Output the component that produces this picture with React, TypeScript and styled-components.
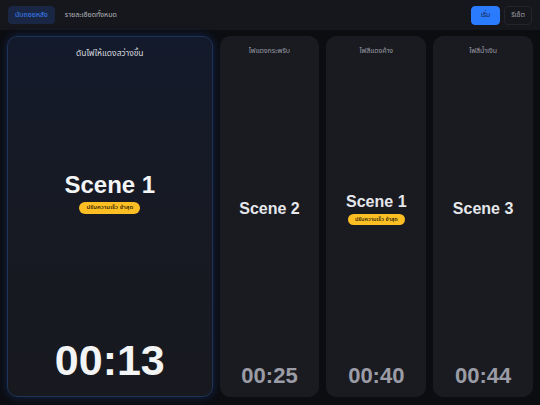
import React from 'react';
import styled, { createGlobalStyle } from 'styled-components';

const GlobalStyle = createGlobalStyle`
  html, body {
    margin: 0;
    padding: 0;
    background: #0c0d11;
    font-family: 'Liberation Sans', Arial, 'Noto Sans Thai', 'Noto Sans', sans-serif;
  }
`;

type Scene = {
  title: string;
  name: string;
  time: string;
  badge?: string;
};

const scenes: Scene[] = [
  { title: 'ดันไฟให้แดงสว่างขึ้น', name: 'Scene 1', time: '00:13', badge: 'ปรับความเร็ว ช้าสุด' },
  { title: 'ไฟแดงกระพริบ', name: 'Scene 2', time: '00:25' },
  { title: 'ไฟสีแดงค้าง', name: 'Scene 1', time: '00:40', badge: 'ปรับความเร็ว ช้าสุด' },
  { title: 'ไฟสีน้ำเงิน', name: 'Scene 3', time: '00:44' },
];

const App: React.FC = () => {
  return (
    <Page>
      <GlobalStyle />
      <TopBar>
        <Tabs>
          <Tab active>นับถอยหลัง</Tab>
          <Tab>รายละเอียดทั้งหมด</Tab>
        </Tabs>
        <Actions>
          <ActionButton primary>เริ่ม</ActionButton>
          <ActionButton>รีเซ็ต</ActionButton>
        </Actions>
      </TopBar>
      <Board>
        {scenes.map((s, i) => (
          <Card key={i} current={i === 0}>
            <CardTitle current={i === 0}>{s.title}</CardTitle>
            <CardBody current={i === 0}>
              <SceneName current={i === 0}>{s.name}</SceneName>
              {s.badge && <Badge current={i === 0}>{s.badge}</Badge>}
            </CardBody>
            <Timer current={i === 0}>{s.time}</Timer>
          </Card>
        ))}
      </Board>
    </Page>
  );
};

export default App;

const Page = styled.div`
  width: 540px;
  height: 405px;
  display: flex;
  flex-direction: column;
  background: #0c0d11;
  overflow: hidden;
`;

const TopBar = styled.div`
  height: 30px;
  display: flex;
  align-items: center;
  justify-content: space-between;
  padding: 0 8px;
  background: #16171c;
  box-sizing: border-box;
`;

const Tabs = styled.div`
  display: flex;
  align-items: center;
  gap: 3px;
`;

const Tab = styled.div<{ active?: boolean }>`
  height: 18px;
  padding: 0 7px;
  display: flex;
  align-items: center;
  border-radius: 4px;
  font-size: 7px;
  color: ${(p) => (p.active ? '#3b82f6' : '#b4b7bf')};
  background: ${(p) => (p.active ? '#1a2744' : 'transparent')};
`;

const Actions = styled.div`
  display: flex;
  align-items: center;
  gap: 4px;
`;

const ActionButton = styled.div<{ primary?: boolean }>`
  height: 19px;
  width: ${(p) => (p.primary ? '29px' : '28px')};
  display: flex;
  align-items: center;
  justify-content: center;
  box-sizing: border-box;
  border-radius: 4px;
  font-size: 7px;
  color: ${(p) => (p.primary ? '#15234a' : '#9a9ca4')};
  background: ${(p) => (p.primary ? '#2b7bff' : 'transparent')};
  border: 1px solid ${(p) => (p.primary ? '#2b7bff' : '#24252b')};
`;

const Board = styled.div`
  flex: 1;
  display: grid;
  grid-template-columns: 206fr 100fr 100fr 100fr;
  gap: 7px;
  padding: 6px 7px 8px;
  box-sizing: border-box;
`;

const Card = styled.div<{ current?: boolean }>`
  display: flex;
  flex-direction: column;
  align-items: center;
  border-radius: 10px;
  box-sizing: border-box;
  padding: ${(p) => (p.current ? '10px 8px 14px' : '8px 6px 9px')};
  background: ${(p) =>
    p.current ? 'linear-gradient(180deg, #131a2b 0%, #171a24 45%, #18191f 100%)' : '#1a1b21'};
  border: 1px solid ${(p) => (p.current ? '#1d3358' : '#1a1b21')};
  box-shadow: ${(p) => (p.current ? '0 0 10px rgba(37, 99, 235, 0.28)' : 'none')};
`;

const CardTitle = styled.div<{ current?: boolean }>`
  font-size: ${(p) => (p.current ? '8.5px' : '7px')};
  color: ${(p) => (p.current ? '#d3d6de' : '#9a9da6')};
  line-height: 12px;
`;

const CardBody = styled.div<{ current?: boolean }>`
  flex: 1;
  display: flex;
  flex-direction: column;
  align-items: center;
  justify-content: center;
  gap: 3px;
  padding-bottom: ${(p) => (p.current ? '12px' : '4px')};
`;

const SceneName = styled.div<{ current?: boolean }>`
  font-weight: 700;
  font-size: ${(p) => (p.current ? '24px' : '16px')};
  color: ${(p) => (p.current ? '#f3f4f6' : '#e5e7eb')};
  line-height: 1.1;
`;

const Badge = styled.div<{ current?: boolean }>`
  height: ${(p) => (p.current ? '12px' : '11px')};
  padding: 0 7px;
  display: flex;
  align-items: center;
  border-radius: 6px;
  background: #fbbf24;
  color: #3a2a05;
  font-size: ${(p) => (p.current ? '6px' : '5.5px')};
  font-weight: 600;
`;

const Timer = styled.div<{ current?: boolean }>`
  font-weight: 700;
  font-size: ${(p) => (p.current ? '43px' : '22px')};
  color: ${(p) => (p.current ? '#f3f4f6' : '#9b9ca6')};
  line-height: 1;
`;
